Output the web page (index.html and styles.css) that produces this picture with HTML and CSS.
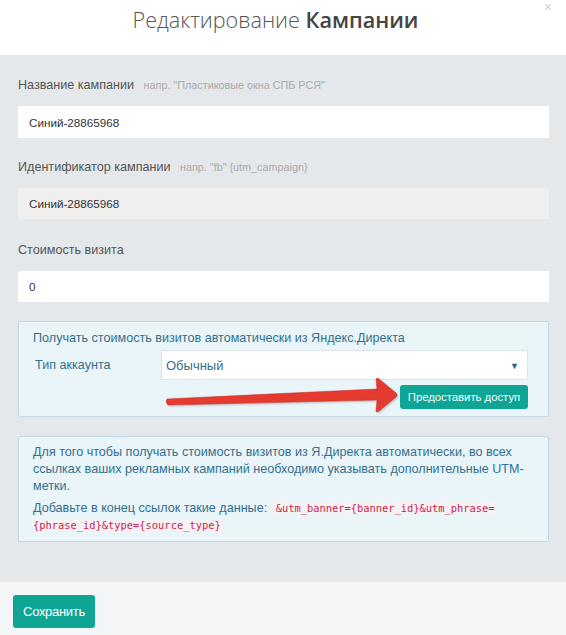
FILE: index.html
```html
<!DOCTYPE html>
<html lang="ru">

<head>
  <meta charset="UTF-8">
  <meta name="viewport" content="width=device-width, initial-scale=1.0">
  <title>Редактирование Кампании</title>
  <link rel="stylesheet" href="styles.css">
</head>

<body>
  <div class="modal">
    <div class="modal-header">
      <h2><span class="light">Редактирование</span> <b>Кампании</b></h2>
      <span class="close">&times;</span>
    </div>

    <div class="modal-body">
      <div class="form-group">
        <label for="name">Название кампании <small>напр. "Пластиковые окна СПБ РСЯ"</small></label>
        <input type="text" id="name" value="Синий-28865968" />
      </div>

      <div class="form-group wide">
        <label for="ident">Идентификатор кампании <small>напр. "fb" {utm_campaign}</small></label>
        <input type="text" id="ident" class="disabled" value="Синий-28865968" disabled />
      </div>

      <div class="form-group last">
        <label for="cost">Стоимость визита</label>
        <input type="text" id="cost" value="0" />
      </div>

      <div class="info-box direct">
        <div class="info-title">Получать стоимость визитов автоматически из Яндекс.Директа</div>
        <div class="row">
          <label for="acc">Тип аккаунта</label>
          <div class="select">
            <span>Обычный</span>
            <i class="caret">&#9660;</i>
          </div>
        </div>
        <div class="row-right">
          <button class="btn btn-small">Предоставить доступ</button>
        </div>

        <svg class="arrow" width="240" height="40" viewBox="0 0 240 40">
          <path d="M2 21 L212 11 L211 1 Q212 -1 214 1 L231 15 Q233 17 231 19 L214 33 Q212 35 211 33 L212 22 L3 27 Q0 24 2 21 Z"
            fill="#e53a2f" stroke="#c9302a" stroke-width="0.5" />
        </svg>
      </div>

      <div class="info-box">
        <p>Для того чтобы получать стоимость визитов из Я.Директа автоматически, во всех ссылках ваших рекламных кампаний необходимо указывать дополнительные UTM-метки.</p>
        <p>Добавьте в конец ссылок такие данные: <code>&amp;utm_banner={banner_id}&amp;utm_phrase={phrase_id}&amp;type={source_type}</code></p>
      </div>
    </div>

    <div class="modal-footer">
      <button class="btn">Сохранить</button>
    </div>
  </div>
</body>

</html>
```

FILE: styles.css
```css
body {
  margin: 0;
  font-family: 'Liberation Sans', Arial, sans-serif;
  font-size: 12.6px;
  color: #333;
  background: #e4e8eb;
}

.modal {
  width: 566px;
  height: 635px;
  display: flex;
  flex-direction: column;
}

.modal-header {
  position: relative;
  background: white;
  height: 55px;
  text-align: center;
}

.modal-header h2 {
  margin: 0;
  padding: 5px 15px 0 0;
  font-family: 'Open Sans', sans-serif;
  font-size: 21.6px;
  line-height: 30px;
  color: #444;
}

.modal-header .light {
  font-weight: 300;
  color: #555;
}

.modal-header b {
  font-weight: 600;
}

.close {
  position: absolute;
  top: 0;
  right: 14px;
  font-size: 14px;
  line-height: 14px;
  color: #cfcfcf;
}

.modal-body {
  flex: 1;
  padding: 21px 17px 0 18px;
}

.form-group {
  margin-bottom: 20px;
}

.form-group.wide {
  margin-bottom: 22px;
}

.form-group.last {
  margin-bottom: 19px;
}

.form-group label {
  display: block;
  line-height: 18px;
  margin-bottom: 12px;
  color: #555;
}

.form-group small {
  font-size: 10.8px;
  line-height: 0;
  color: #aaa;
  margin-left: 6px;
}

input {
  display: block;
  box-sizing: border-box;
  width: 100%;
  height: 32px;
  padding: 0 11px;
  border: none;
  background: white;
  font-family: 'Liberation Sans', Arial, sans-serif;
  font-size: 11.7px;
  color: #333;
}

input.disabled {
  background: #efefef;
  height: 31px;
}

#cost {
  height: 31px;
}

.info-box {
  position: relative;
  background: #eaf5fa;
  border: 1px solid #c2d8e4;
  border-radius: 2px;
  padding: 7px 20px 7px 14px;
  color: #31708f;
  margin-bottom: 19px;
}

.info-title {
  line-height: 18px;
}

.direct .row {
  display: flex;
  align-items: center;
  margin-top: 3px;
}

.direct .row label {
  width: 126px;
  padding-left: 2px;
}

.select {
  flex: 1;
  height: 30px;
  box-sizing: border-box;
  background: white;
  border: 1px solid #dde3e6;
  display: flex;
  align-items: center;
  justify-content: space-between;
  padding: 1px 8px 0 4px;
  font-size: 13px;
}

.caret {
  font-style: normal;
  font-size: 9px;
  color: #2b5f82;
}

.row-right {
  display: flex;
  justify-content: flex-end;
  margin-top: 5px;
}

.btn {
  background-color: #0fa595;
  color: white;
  border: none;
  border-radius: 3px;
  font-family: 'Liberation Sans', Arial, sans-serif;
  font-size: 13px;
  height: 33px;
  width: 82px;
  padding: 0;
  letter-spacing: -0.3px;
}

.btn-small {
  font-size: 11.3px;
  height: 24px;
  width: 128px;
  letter-spacing: 0;
}

.arrow {
  position: absolute;
  left: 146px;
  top: 56px;
  filter: drop-shadow(1px 1px 1px rgba(0, 0, 0, 0.25));
}

.info-box p {
  margin: 0;
  line-height: 17px;
}

.info-box p + p {
  margin-top: 5px;
}

code {
  font-family: 'DejaVu Sans Mono', monospace;
  font-size: 10.4px;
  line-height: 17px;
  color: #c7254e;
  background: #f9f2f4;
  padding: 0 2px;
  margin-left: 3px;
}

.modal-footer {
  background: #f3f5f6;
  height: 53px;
  padding: 13px 13px 0;
  box-sizing: border-box;
}
```
